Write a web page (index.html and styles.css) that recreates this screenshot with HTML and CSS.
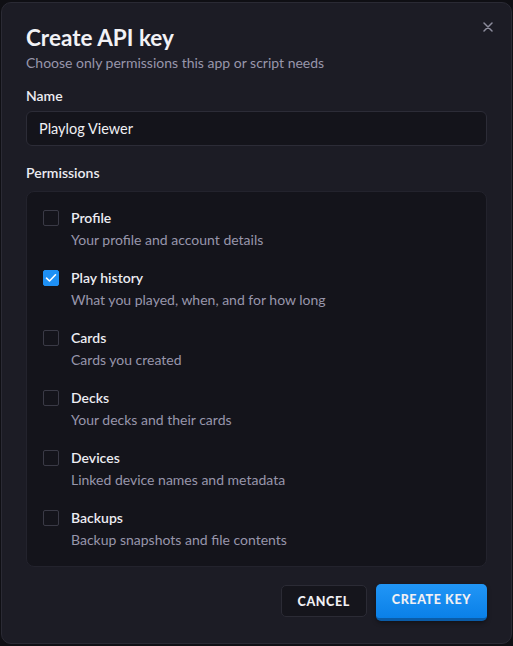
FILE: index.html
```html
<!DOCTYPE html>
<html lang="en">
<head>
    <meta charset="UTF-8">
    <meta name="viewport" content="width=device-width, initial-scale=1.0">
    <title>Create API key</title>
    <link rel="stylesheet" href="styles.css">
</head>
<body>
    <div class="dialog">
        <button class="close" aria-label="Close">
            <svg width="10" height="10" viewBox="0 0 10 10"><path d="M1 1L9 9M9 1L1 9" stroke="currentColor" stroke-width="1.5" stroke-linecap="round"/></svg>
        </button>

        <h2>Create API key</h2>
        <p class="subtitle">Choose only permissions this app or script needs</p>

        <label class="field-label" for="keyName">Name</label>
        <input class="text-input" id="keyName" type="text" value="Playlog Viewer">

        <div class="field-label perm-title">Permissions</div>
        <div class="perm-list">
            <label class="perm">
                <span class="check"></span>
                <span class="perm-text">
                    <span class="perm-name">Profile</span>
                    <span class="perm-desc">Your profile and account details</span>
                </span>
            </label>
            <label class="perm">
                <span class="check on">
                    <svg width="12" height="10" viewBox="0 0 12 10"><path d="M1.5 5.2L4.5 8L10.5 1.8" fill="none" stroke="#fff" stroke-width="1.6" stroke-linecap="round" stroke-linejoin="round"/></svg>
                </span>
                <span class="perm-text">
                    <span class="perm-name">Play history</span>
                    <span class="perm-desc">What you played, when, and for how long</span>
                </span>
            </label>
            <label class="perm">
                <span class="check"></span>
                <span class="perm-text">
                    <span class="perm-name">Cards</span>
                    <span class="perm-desc">Cards you created</span>
                </span>
            </label>
            <label class="perm">
                <span class="check"></span>
                <span class="perm-text">
                    <span class="perm-name">Decks</span>
                    <span class="perm-desc">Your decks and their cards</span>
                </span>
            </label>
            <label class="perm">
                <span class="check"></span>
                <span class="perm-text">
                    <span class="perm-name">Devices</span>
                    <span class="perm-desc">Linked device names and metadata</span>
                </span>
            </label>
            <label class="perm">
                <span class="check"></span>
                <span class="perm-text">
                    <span class="perm-name">Backups</span>
                    <span class="perm-desc">Backup snapshots and file contents</span>
                </span>
            </label>
        </div>

        <div class="actions">
            <button class="btn btn-cancel">Cancel</button>
            <button class="btn btn-primary">Create key</button>
        </div>
    </div>
</body>
</html>
```

FILE: styles.css
```css
* {
    margin: 0;
    padding: 0;
    box-sizing: border-box;
}
body {
    font-family: 'Lato', 'Noto Sans', sans-serif;
    background: #0f0f14;
    color: #ececf2;
    padding: 2px 1px 2px 1px;
    height: 646px;
    overflow: hidden;
}
.dialog {
    position: relative;
    height: 642px;
    background: #1c1c25;
    border: 1px solid #2a2a34;
    border-radius: 10px;
    padding: 21px 24px 0 24px;
    display: flex;
    flex-direction: column;
}
.close {
    position: absolute;
    top: 17px;
    right: 16px;
    background: none;
    border: none;
    color: #8c8c9c;
    width: 14px;
    height: 14px;
    display: flex;
    align-items: center;
    justify-content: center;
}
h2 {
    font-size: 22.5px;
    font-weight: 700;
    color: #f2f2f6;
    line-height: 28px;
}
.subtitle {
    font-size: 14px;
    color: #9896ab;
    margin-top: 1px;
    line-height: 20px;
}
.field-label {
    display: block;
    font-size: 14px;
    font-weight: 600;
    color: #ececf2;
    line-height: 20px;
    margin-top: 13px;
}
.text-input {
    margin-top: 5px;
    width: 100%;
    height: 35px;
    background: #14141b;
    border: 1px solid #2c2c37;
    border-radius: 6px;
    color: #f0f0f4;
    font-family: inherit;
    font-size: 14.5px;
    padding: 0 12px;
    outline: none;
}
.perm-title {
    margin-top: 17px;
}
.perm-list {
    margin-top: 8px;
    background: #14141b;
    border: 1px solid #23232d;
    border-radius: 8px;
    padding: 16px 16px 16px 16px;
    display: flex;
    flex-direction: column;
    gap: 18px;
}
.perm {
    display: flex;
    gap: 12px;
}
.check {
    flex: none;
    width: 16px;
    height: 16px;
    border: 1px solid #3a3a46;
    border-radius: 2px;
    margin-top: 2px;
    display: flex;
    align-items: center;
    justify-content: center;
}
.check.on {
    background: #1e90f5;
    border-color: #1e90f5;
}
.perm-text {
    display: flex;
    flex-direction: column;
    gap: 2px;
}
.perm-name {
    font-size: 14px;
    font-weight: 600;
    color: #ececf2;
    line-height: 20px;
}
.perm-desc {
    font-size: 14px;
    color: #9896ab;
    line-height: 20px;
}
.actions {
    display: flex;
    justify-content: flex-end;
    align-items: flex-start;
    gap: 9px;
    margin-top: 17px;
}
.btn {
    font-family: inherit;
    font-size: 12.5px;
    font-weight: 900;
    letter-spacing: 0.6px;
    text-transform: uppercase;
    color: #f0f0f4;
    border-radius: 5px;
    cursor: pointer;
}
.btn-cancel {
    height: 32px;
    margin-top: 1px;
    padding: 0 16px;
    background: #15151c;
    border: 1px solid #2b2b35;
}
.btn-primary {
    height: 37px;
    padding: 0 16px 3px 16px;
    background: linear-gradient(#2196f6, #0a80e8);
    border: none;
    border-bottom: 3px solid #0a5ca8;
    box-shadow: 0 2px 4px rgba(0, 0, 0, 0.35);
}
```
